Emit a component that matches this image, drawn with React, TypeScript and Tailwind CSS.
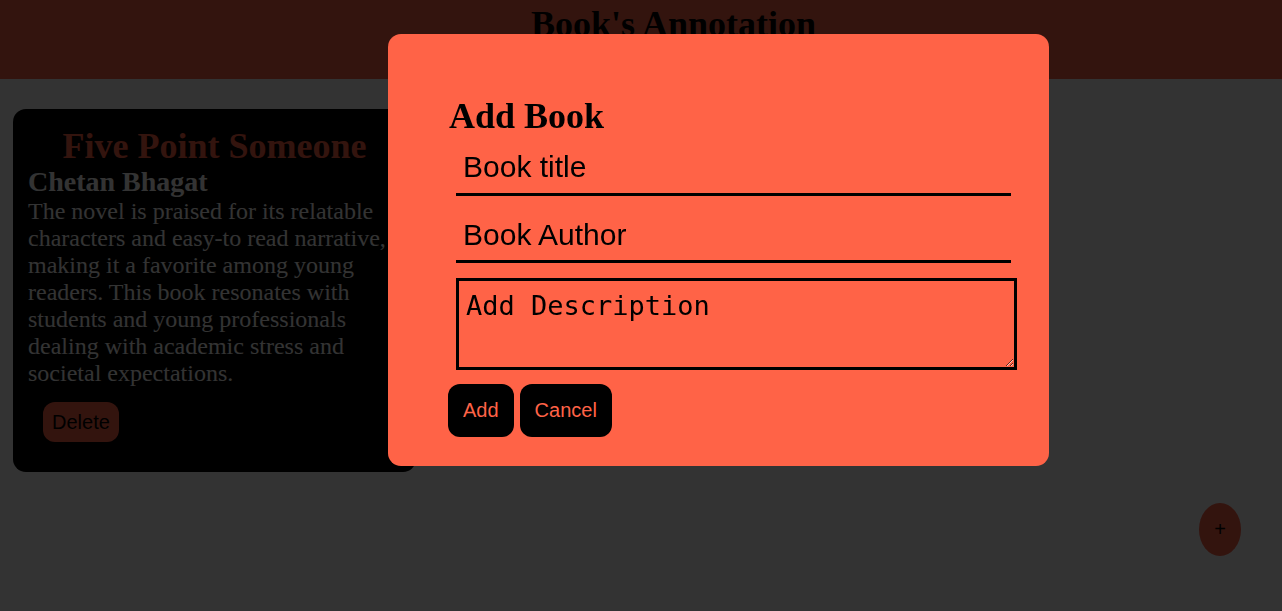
import React from "react";

export default function App() {
  return (
    <div className="relative min-h-[611px] bg-white font-['Liberation_Serif',serif]">
      <header className="h-[79px] bg-[#ff6347] pt-[4px] pl-[65px] text-center">
        <h1 className="text-[36px] leading-[40px] font-bold text-black">Book's Annotation</h1>
      </header>
      <main className="pt-[30px] pl-[13px]">
        <div className="w-[403px] bg-black rounded-[13px] pt-[17px] px-[15px] pb-[30px]">
          <h2 className="text-center text-[36px] leading-[40px] font-bold text-[#ff6347]">Five Point Someone</h2>
          <h3 className="text-[28px] leading-[32px] font-bold text-white">Chetan Bhagat</h3>
          <p className="text-[24px] leading-[27px] text-white">
            The novel is praised for its relatable characters and easy-to read narrative, making it a favorite among young readers. This book resonates with students and young professionals dealing with academic stress and societal expectations.
          </p>
          <button className="mt-[15px] ml-[15px] h-[40px] px-[9px] rounded-[12px] bg-[#ff6347] text-black font-['Liberation_Sans',sans-serif] text-[20px] leading-[23px]">
            Delete
          </button>
        </div>
      </main>

      <button className="fixed right-[41px] bottom-[55px] w-[42px] h-[53px] rounded-[50%] bg-[#ff6347] text-black font-['Liberation_Sans',sans-serif] text-[20px] leading-[23px]">
        +
      </button>

      <div className="fixed inset-0 bg-black/80" />

      <div className="fixed left-[388px] top-[34px] w-[661px] h-[432px] bg-[#ff6347] rounded-[13px] pt-[61px] pl-[60px]">
        <h2 className="text-[36px] leading-[40px] font-bold text-black font-['Liberation_Serif',serif] pl-[1px] pt-[1px] h-[40px]">Add Book</h2>
        <input
          placeholder="Book title"
          className="block ml-[8px] w-[555px] h-[61px] pt-[6px] pl-[7px] border-b-[3px] border-black bg-transparent outline-none text-black font-['Liberation_Sans',sans-serif] text-[30px] leading-[34px] placeholder:text-black"
        />
        <input
          placeholder="Book Author"
          className="block ml-[8px] mt-[6px] w-[555px] h-[61px] pt-[8px] pl-[7px] border-b-[3px] border-black bg-transparent outline-none text-black font-['Liberation_Sans',sans-serif] text-[30px] leading-[34px] placeholder:text-black"
        />
        <textarea
          placeholder="Add Description"
          className="block ml-[8px] mt-[15px] w-[561px] h-[92px] border-[3px] border-black bg-transparent outline-none pt-[9px] pl-[7px] text-black font-['DejaVu_Sans_Mono',monospace] text-[27px] leading-[31px] placeholder:text-black"
        />
        <div className="flex gap-[6px] mt-[14px]">
          <button className="bg-black text-[#ff6347] rounded-[12px] p-[15px] text-[20px] leading-[23px] font-['Liberation_Sans',sans-serif]">
            Add
          </button>
          <button className="bg-black text-[#ff6347] rounded-[12px] p-[15px] text-[20px] leading-[23px] font-['Liberation_Sans',sans-serif]">
            Cancel
          </button>
        </div>
      </div>
    </div>
  );
}
